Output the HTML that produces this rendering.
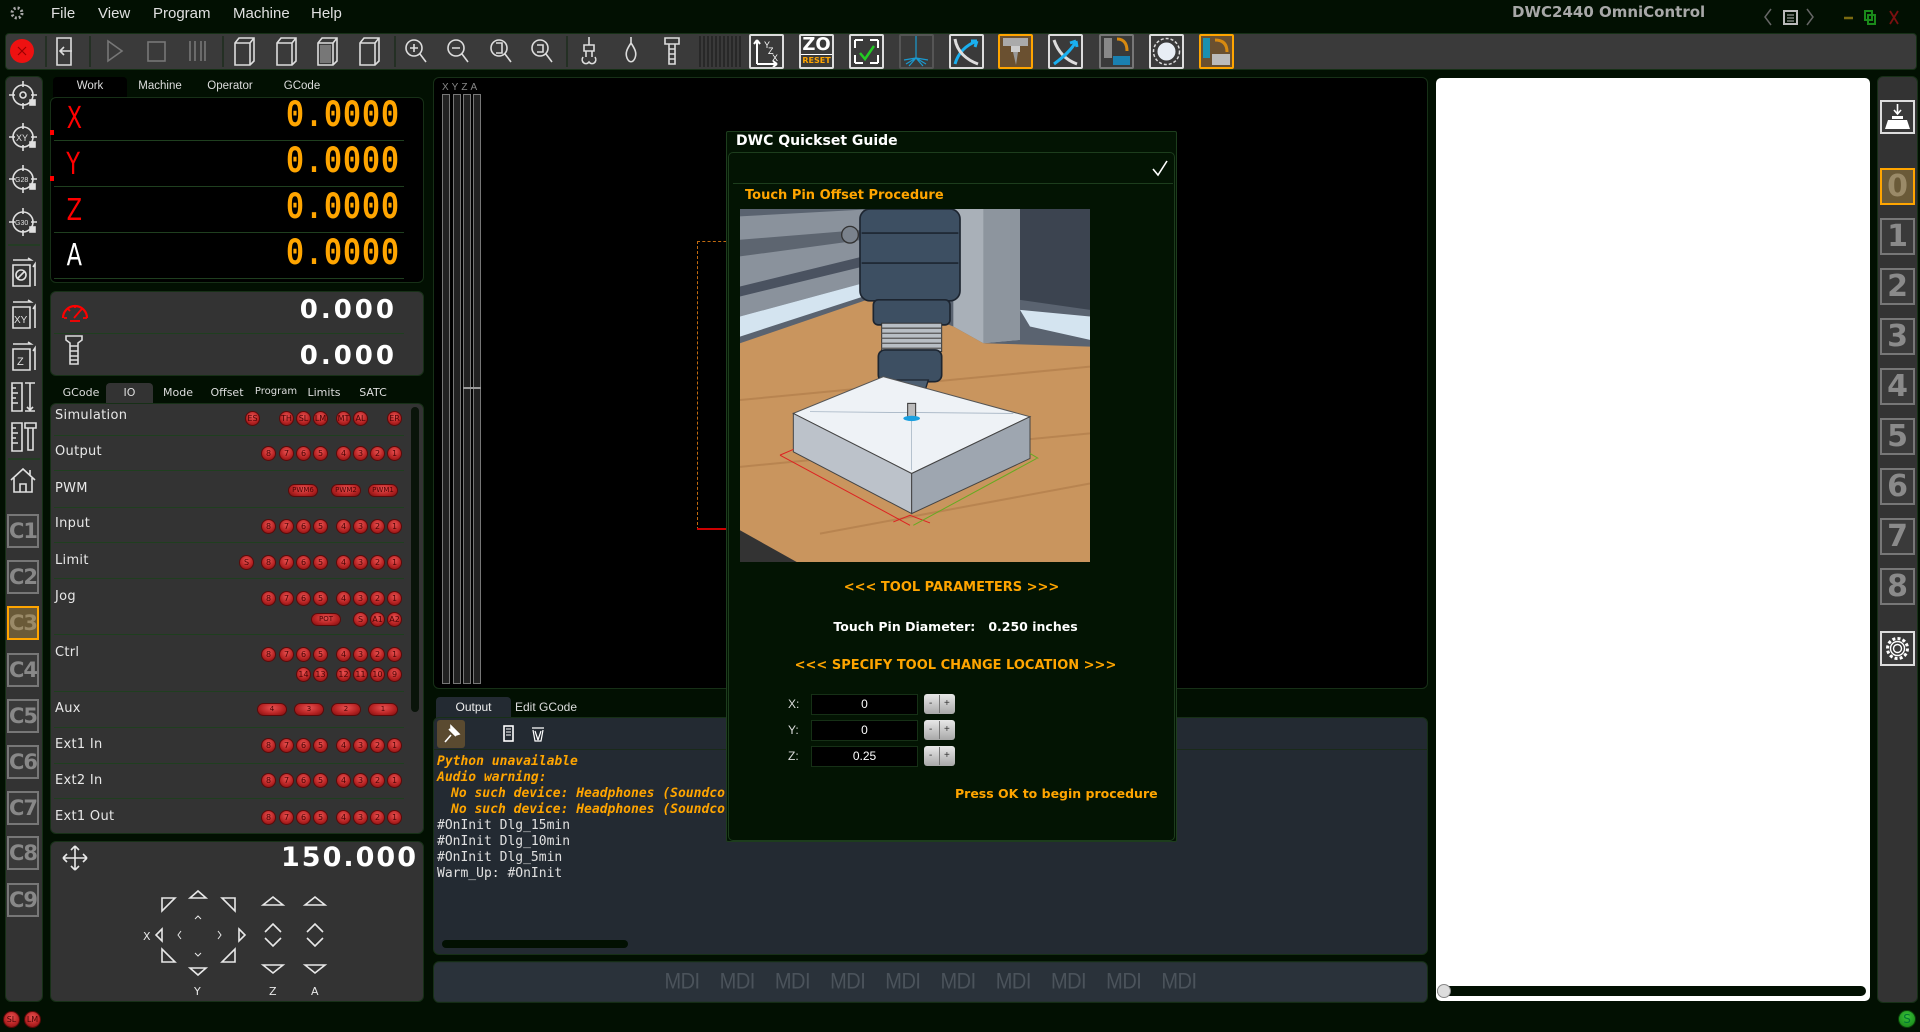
<!DOCTYPE html>
<html><head><meta charset="utf-8">
<style>
*{margin:0;padding:0;box-sizing:border-box}
body{width:1920px;height:1032px;background:#021002;position:relative;overflow:hidden;font-family:"Liberation Sans","DejaVu Sans",sans-serif;color:#ddd}
.a{position:absolute}
.menu{top:5px;font-size:15px;color:#e0e0e0}
.tb{left:5px;top:33px;width:1912px;height:37px;background:#3a3a3a;border:1px solid #163016;border-radius:4px}
.cb{top:34px;width:35px;height:35px;border:2px solid #ddd;background:#3a3a3a;border-radius:2px}
.panel{background:#333;border:1px solid #173017;border-radius:6px}
.lcol{left:5px;top:76px;width:38px;height:926px;background:#333;border:1px solid #173017;border-radius:6px}
.cbox{left:7px;width:32px;height:34px;border:2px solid #777;background:#3a3a3a;font:bold 21px "DejaVu Sans",sans-serif;color:#888;text-align:center;line-height:30px;letter-spacing:-1px;overflow:hidden}
.nbox{left:1880px;width:35px;height:37px;border:2px solid #777;background:#3a3a3a;font:bold 30px "DejaVu Sans",sans-serif;color:#8a8a8a;text-align:center;line-height:33px}
.tab{font-size:11.5px;color:#ddd;text-align:center}
.dro{font:bold 30px "Liberation Mono",monospace;color:#ffa500;transform:scaleY(1.3);transform-origin:right center;letter-spacing:1px}
.ax{font:30px "DejaVu Sans",sans-serif;color:#f00;transform:scaleX(.75)}
.lbl{left:55px;font:13px "DejaVu Sans",sans-serif;color:#e8e8e8;letter-spacing:.3px}
.hl{left:54px;width:350px;height:1px;background:#1f3f1f}
.led{position:absolute;width:15px;height:15px;margin:-8px 0 0 -8px;border-radius:50%;background:radial-gradient(circle at 50% 35%,#e85050,#b52222 60%,#7a1010);border:1px solid #5a0a0a;font:8px "DejaVu Sans",sans-serif;color:#4a0505;text-align:center;line-height:13px}
.pill{position:absolute;width:30px;height:13px;margin:-7px 0 0 -15px;border-radius:7px;background:radial-gradient(ellipse at 50% 35%,#e85050,#b52222 60%,#7a1010);border:1px solid #5a0a0a;font:7px "DejaVu Sans",sans-serif;color:#4a0505;text-align:center;line-height:11px}
.out{font:italic bold 13px "DejaVu Sans Mono","Liberation Mono",monospace;color:#ffa500;left:437px}
.outw{font:13px "DejaVu Sans Mono","Liberation Mono",monospace;color:#e0e0e0;left:437px}
.inp{left:811px;width:107px;height:21px;background:#000;border:1px solid #163016;color:#fff;font-size:12px;text-align:center;line-height:19px}
.pm{left:924px;width:31px;height:20px;background:linear-gradient(#e8e8e8,#a8a8a8);border-radius:3px;font:10px sans-serif;color:#333;line-height:20px}
.xyl{left:788px;font-size:12px;color:#ddd}
</style></head><body>

<svg class="a" style="left:8px;top:4px" width="18" height="18" viewBox="0 0 18 18"><circle cx="9" cy="9" r="5" fill="none" stroke="#aaa" stroke-width="3" stroke-dasharray="2 2"/></svg>
<div class="a menu" style="left:51px">File</div>
<div class="a menu" style="left:98px">View</div>
<div class="a menu" style="left:153px">Program</div>
<div class="a menu" style="left:233px">Machine</div>
<div class="a menu" style="left:311px">Help</div>
<div class="a" style="left:1512px;top:3px;font:bold 15px 'DejaVu Sans',sans-serif;color:#a8a8a8">DWC2440 OmniControl</div>
<svg class="a" style="left:1762px;top:6px" width="158" height="22" viewBox="0 0 158 22">
<path d="M9 3 L3 11 L9 19" fill="none" stroke="#666" stroke-width="1.5"/>
<rect x="22" y="5" width="13" height="13" fill="none" stroke="#bbb" stroke-width="2"/><path d="M25 9h7M25 12h7M25 15h7" stroke="#bbb"/>
<path d="M45 3 L51 11 L45 19" fill="none" stroke="#666" stroke-width="1.5"/>
<path d="M82 12h9" stroke="#7a6a10" stroke-width="2.5"/>
<rect x="103" y="5" width="7" height="9" fill="none" stroke="#1a8a1a" stroke-width="2"/><rect x="106" y="9" width="7" height="9" fill="none" stroke="#1a8a1a" stroke-width="2"/>
<path d="M128 5l8 13M136 5l-8 13" stroke="#7a1010" stroke-width="1.8"/>
</svg>

<div class="a tb"></div>
<svg class="a" style="left:0;top:33px" width="760" height="37" viewBox="0 0 760 37" fill="none" stroke="#ddd" stroke-width="1.6">
<circle cx="22" cy="18" r="12" fill="#ee1111" stroke="none"/><path d="M18 14l8 8M26 14l-8 8" stroke="#900" stroke-width="1.2"/>
<path d="M46 3v31M90 3v31M223 3v31M395 3v31M567 3v31" stroke="#1c2c1c" stroke-width="1.5"/>
<path d="M57 5h14v27H57z M72 18H60 M64 14l-4 4 4 4"/>
<path d="M108 8l14 10-14 10z" stroke="#777"/>
<rect x="148" y="9" width="17" height="19" stroke="#777"/>
<path d="M190 8v20M195 8v20M201 8v20M205 8v20" stroke="#777"/>
<path d="M235 10l4-5h15v23l-4 4h-15z M235 10h15v22 M250 10l4-5" />
<path d="M277 10l4-5h15v23l-4 4h-15z M277 10h15v22 M292 10l4-5" />
<path d="M318 10l4-5h15v23l-4 4h-15z M318 10h15v22 M333 10l4-5" /><rect x="320" y="12" width="11" height="18" fill="#777" stroke="none"/>
<path d="M360 10l4-5h15v23l-4 4h-15z M360 10h15v22 M375 10l4-5" />
<circle cx="414" cy="15" r="8"/><path d="M420 21l6 8 M410 15h8 M414 11v8"/>
<circle cx="456" cy="15" r="8"/><path d="M462 21l6 8 M452 15h8"/>
<circle cx="499" cy="15" r="8"/><path d="M505 21l6 8 M496 10h6v10h-6"/>
<circle cx="540" cy="15" r="8"/><path d="M546 21l6 8 M537 12h6v7h-6"/>
<path d="M589 4v8 M584 12h10v6h-10z M586 18v6 M592 18v6 M583 24c-3 5 3 9 6 5 3 4 9 0 6-5"/>
<path d="M631 4v6 M631 10c-4 6-6 10-4 15 2 5 6 5 8 0 2-5 0-9-4-15z"/>
<path d="M665 5h14v6h-14z M669 11h6v20h-6z M669 16h6M669 21h6M669 26h6"/>
<path d="M700 3v31M704 3v31M708 3v31M712 3v31M716 3v31M720 3v31M724 3v31M728 3v31M732 3v31M736 3v31M740 3v31" stroke="#222" stroke-width="1.5"/>
</svg>
<div class="a cb" style="left:749px"><svg width="31" height="31" viewBox="0 0 31 31" fill="none" stroke="#fff" stroke-width="2"><path d="M6 28V4M6 4l-3 4M6 4l3 4M6 28h20M26 28l-4-3M26 28l-4 3"/><text x="13" y="12" font-size="9" fill="#fff" stroke="none">Y</text><text x="17" y="18" font-size="9" fill="#fff" stroke="none">Z</text><text x="21" y="25" font-size="9" fill="#fff" stroke="none">X</text></svg></div>
<div class="a cb" style="left:799px;font:bold 18px 'DejaVu Sans',sans-serif;color:#fff;text-align:center;line-height:18px">ZO<div style="font-size:8px;color:#ffa500;border-top:1px solid #fff;line-height:11px">RESET</div></div>
<div class="a cb" style="left:849px"><svg width="31" height="31" viewBox="0 0 31 31" fill="none" stroke="#fff" stroke-width="2"><path d="M4 4h8M4 4v8M27 4h-8M27 4v8M4 27h8M4 27v-8M27 27h-8M27 27v-8"/><path d="M9 17l5 6 9-13" stroke="#2c2" stroke-width="2.5"/></svg></div>
<div class="a cb" style="left:899px;border-color:#555"><svg width="31" height="31" viewBox="0 0 31 31" fill="none" stroke="#1a9ad0" stroke-width="1.2"><path d="M15 0v22M15 22l-10 6M15 22l10 6M15 22l-7 8M15 22l7 8M15 22l-12 2M15 22l12 2"/></svg></div>
<div class="a cb" style="left:949px"><svg width="31" height="31" viewBox="0 0 31 31" fill="none" stroke-width="3"><path d="M4 28C8 14 18 8 26 5M26 5l-6 0M26 5l-2 6" stroke="#1ab0f0"/><path d="M4 3C6 16 16 24 27 28" stroke="#ddd"/></svg></div>
<div class="a cb" style="left:998px;border-color:#ffa500;background:#6a5030"><svg width="31" height="31" viewBox="0 0 31 31"><rect x="3" y="2" width="25" height="8" fill="#aaa"/><rect x="11" y="10" width="9" height="6" fill="#ccc"/><path d="M13 16h5l-2 13z" fill="#999"/></svg></div>
<div class="a cb" style="left:1048px"><svg width="31" height="31" viewBox="0 0 31 31" fill="none" stroke-width="3"><path d="M4 4C8 16 16 24 27 28" stroke="#ddd"/><path d="M4 28C12 22 22 14 26 5M26 5l-6 2M26 5l1 6" stroke="#1ab0f0"/></svg></div>
<div class="a cb" style="left:1099px;border-color:#777"><svg width="31" height="31" viewBox="0 0 31 31"><rect x="3" y="2" width="8" height="20" fill="#888"/><rect x="12" y="20" width="17" height="9" fill="#1a80b0"/><path d="M16 3c8 0 10 6 10 12" stroke="#d88a10" stroke-width="3" fill="none"/></svg></div>
<div class="a cb" style="left:1149px"><svg width="31" height="31" viewBox="0 0 31 31"><circle cx="15.5" cy="15.5" r="9" fill="#e8eef5"/><circle cx="15.5" cy="15.5" r="13" fill="none" stroke="#ddd" stroke-width="1.5" stroke-dasharray="3 2"/></svg></div>
<div class="a cb" style="left:1199px;border-color:#ffa500;background:#6a5030"><svg width="31" height="31" viewBox="0 0 31 31"><rect x="2" y="2" width="7" height="20" fill="#1a90b0"/><rect x="11" y="18" width="18" height="11" fill="#bbb"/><path d="M26 16c0-8-4-12-12-12" stroke="#d88a10" stroke-width="3" fill="none"/></svg></div>

<div class="a lcol"></div>
<svg class="a" style="left:5px;top:76px" width="38" height="420" viewBox="0 0 38 420" fill="none" stroke="#e0e0e0" stroke-width="1.6">
<g><circle cx="18" cy="19" r="10"/><path d="M18 5v6M18 27v6M4 19h6M26 19h6"/><circle cx="18" cy="19" r="3"/><rect x="25" y="24" width="5" height="5" fill="#e0e0e0"/></g>
<g transform="translate(0,42)"><circle cx="18" cy="19" r="10"/><path d="M18 5v6M18 27v6M4 19h6M26 19h6"/><text x="11" y="23" font-size="9" fill="#e0e0e0" stroke="none">XY</text><rect x="25" y="24" width="5" height="5" fill="#e0e0e0"/></g>
<g transform="translate(0,84)"><circle cx="18" cy="19" r="10"/><path d="M18 5v6M18 27v6M4 19h6M26 19h6"/><text x="10" y="22" font-size="7" fill="#e0e0e0" stroke="none">G28</text><rect x="25" y="24" width="5" height="5" fill="#e0e0e0"/></g>
<g transform="translate(0,127)"><circle cx="18" cy="19" r="10"/><path d="M18 5v6M18 27v6M4 19h6M26 19h6"/><text x="10" y="22" font-size="7" fill="#e0e0e0" stroke="none">G30</text><rect x="25" y="24" width="5" height="5" fill="#e0e0e0"/></g>
<path d="M3 169h32" stroke="#1f3f1f"/>
<g transform="translate(0,180)"><path d="M8 4h18l-3-2M8 9h17v21H8z M30 30V8l-2 3"/><circle cx="16" cy="19" r="5"/><path d="M12 23l8-8"/></g>
<g transform="translate(0,222)"><path d="M8 4h18l-3-2M8 9h17v21H8z M30 30V8l-2 3"/><text x="9" y="25" font-size="10" fill="#e0e0e0" stroke="none">XY</text></g>
<g transform="translate(0,264)"><path d="M8 4h18l-3-2M8 9h17v21H8z M30 30V8l-2 3"/><text x="12" y="25" font-size="11" fill="#e0e0e0" stroke="none">Z</text></g>
<g transform="translate(0,304)"><path d="M7 3h10v28H7z M7 8h4M7 13h6M7 18h4M7 23h6M20 3h10M25 3v27M20 31h10M22 27l3 3 3-3"/></g>
<g transform="translate(0,344)"><path d="M7 3h10v28H7z M7 8h4M7 13h6M7 18h4M7 23h6M20 3h11v5H20z M23 8h5v22h-5z"/></g>
<path d="M3 383h32" stroke="#1f3f1f"/>
<g transform="translate(0,388)"><path d="M6 16L18 5l12 11M9 14v14h18V14M15 28v-8h6v8M25 6v5"/></g>
<path d="M3 422h32M3 432h32" stroke="#1f3f1f"/>
</svg>
<div class="a cbox" style="top:514px">C1</div>
<div class="a cbox" style="top:560px">C2</div>
<div class="a cbox" style="top:606px;border-color:#ffa500;background:#6a5a38;color:#9a8a68">C3</div>
<div class="a cbox" style="top:653px">C4</div>
<div class="a cbox" style="top:699px">C5</div>
<div class="a cbox" style="top:745px">C6</div>
<div class="a cbox" style="top:791px">C7</div>
<div class="a cbox" style="top:836px">C8</div>
<div class="a cbox" style="top:883px">C9</div>

<div class="a" style="left:53px;top:77px;width:74px;height:22px;background:#000;border-radius:4px 4px 0 0"></div>
<div class="a tab" style="left:53px;top:80px;width:74px">Work</div>
<div class="a tab" style="left:130px;top:80px;width:60px">Machine</div>
<div class="a tab" style="left:200px;top:80px;width:60px">Operator</div>
<div class="a tab" style="left:272px;top:80px;width:60px">GCode</div>
<div class="a" style="left:50px;top:97px;width:374px;height:186px;background:#000;border:1px solid #173017;border-radius:6px"></div>
<div class="a hl" style="top:140px"></div>
<div class="a hl" style="top:186px"></div>
<div class="a hl" style="top:232px"></div>
<div class="a hl" style="top:278px"></div>
<div class="a" style="left:50px;top:130px;width:4px;height:5px;background:#f00"></div>
<div class="a" style="left:50px;top:176px;width:4px;height:5px;background:#f00"></div>
<div class="a ax" style="left:64px;top:101px">X</div>
<div class="a ax" style="left:64px;top:147px">Y</div>
<div class="a ax" style="left:64px;top:193px">Z</div>
<div class="a ax" style="left:64px;top:238px;color:#fff">A</div>
<div class="a dro" style="right:1520px;top:100px">0.0000</div>
<div class="a dro" style="right:1520px;top:146px">0.0000</div>
<div class="a dro" style="right:1520px;top:192px">0.0000</div>
<div class="a dro" style="right:1520px;top:238px">0.0000</div>

<div class="a panel" style="left:50px;top:291px;width:374px;height:85px"></div>
<div class="a hl" style="top:333px"></div>
<svg class="a" style="left:60px;top:296px" width="30" height="72" viewBox="0 0 30 72" fill="none">
<path d="M3 22a12 12 0 1 1 24 0" stroke="#f00" stroke-width="2.2"/><path d="M4 22h3M23 22h4M15 9v3M8 13l2 2M22 13l-2 2M14 22l6-7M10 25h10" stroke="#f00" stroke-width="1.8"/>
<path d="M6 40h16v4l-4 3v3h-8v-3l-4-3z M10 50h8v18h-8z M10 55h8M10 60h8M10 64h8" stroke="#ddd" stroke-width="1.6"/>
</svg>
<div class="a" style="right:1523px;top:295px;font:bold 26px 'DejaVu Sans',sans-serif;color:#fff;letter-spacing:3px">0.000</div>
<div class="a" style="right:1523px;top:341px;font:bold 26px 'DejaVu Sans',sans-serif;color:#fff;letter-spacing:3px">0.000</div>

<div class="a" style="left:106px;top:383px;width:47px;height:22px;background:#333;border-radius:4px 4px 0 0"></div>
<div class="a tab" style="left:58px;top:386px;width:46px;font-family:'DejaVu Sans';font-size:11px">GCode</div>
<div class="a tab" style="left:106px;top:386px;width:47px;font-family:'DejaVu Sans';font-size:11px">IO</div>
<div class="a tab" style="left:157px;top:386px;width:42px;font-family:'DejaVu Sans';font-size:11px">Mode</div>
<div class="a tab" style="left:204px;top:386px;width:46px;font-family:'DejaVu Sans';font-size:11px">Offset</div>
<div class="a tab" style="left:252px;top:386px;width:48px;font-family:'DejaVu Sans';font-size:10px">Program</div>
<div class="a tab" style="left:302px;top:386px;width:44px;font-family:'DejaVu Sans';font-size:11px">Limits</div>
<div class="a tab" style="left:352px;top:386px;width:42px;font-family:'DejaVu Sans';font-size:11px">SATC</div>
<div class="a panel" style="left:50px;top:403px;width:374px;height:431px"></div>
<div class="a" style="left:411px;top:407px;width:8px;height:305px;background:#0a140a;border-radius:4px"></div>
<div class="a hl" style="top:435px"></div><div class="a hl" style="top:470px"></div><div class="a hl" style="top:507px"></div><div class="a hl" style="top:542px"></div><div class="a hl" style="top:578px"></div><div class="a hl" style="top:634px"></div><div class="a hl" style="top:691px"></div><div class="a hl" style="top:727px"></div><div class="a hl" style="top:763px"></div><div class="a hl" style="top:798px"></div>
<div class="a lbl" style="top:408px">Simulation</div>
<div class="a lbl" style="top:444px">Output</div>
<div class="a lbl" style="top:481px">PWM</div>
<div class="a lbl" style="top:516px">Input</div>
<div class="a lbl" style="top:553px">Limit</div>
<div class="a lbl" style="top:589px">Jog</div>
<div class="a lbl" style="top:645px">Ctrl</div>
<div class="a lbl" style="top:701px">Aux</div>
<div class="a lbl" style="top:737px">Ext1 In</div>
<div class="a lbl" style="top:773px">Ext2 In</div>
<div class="a lbl" style="top:809px">Ext1 Out</div>

<div style="position:absolute;left:0;top:419px"><span class="led" style="left:253px">ES</span><span class="led" style="left:287px">TH</span><span class="led" style="left:304px">SL</span><span class="led" style="left:321px">LM</span><span class="led" style="left:344px">MT</span><span class="led" style="left:361px">AL</span><span class="led" style="left:395px">ER</span></div>
<div style="position:absolute;left:0;top:454px"><span class="led" style="left:269px">8</span><span class="led" style="left:287px">7</span><span class="led" style="left:304px">6</span><span class="led" style="left:321px">5</span><span class="led" style="left:344px">4</span><span class="led" style="left:361px">3</span><span class="led" style="left:378px">2</span><span class="led" style="left:395px">1</span></div>
<div style="position:absolute;left:0;top:491px"><span class="pill" style="left:303px">PWM6</span><span class="pill" style="left:346px">PWM2</span><span class="pill" style="left:383px">PWM1</span></div>
<div style="position:absolute;left:0;top:527px"><span class="led" style="left:269px">8</span><span class="led" style="left:287px">7</span><span class="led" style="left:304px">6</span><span class="led" style="left:321px">5</span><span class="led" style="left:344px">4</span><span class="led" style="left:361px">3</span><span class="led" style="left:378px">2</span><span class="led" style="left:395px">1</span></div>
<div style="position:absolute;left:0;top:563px"><span class="led" style="left:247px">S</span><span class="led" style="left:269px">8</span><span class="led" style="left:287px">7</span><span class="led" style="left:304px">6</span><span class="led" style="left:321px">5</span><span class="led" style="left:344px">4</span><span class="led" style="left:361px">3</span><span class="led" style="left:378px">2</span><span class="led" style="left:395px">1</span></div>
<div style="position:absolute;left:0;top:599px"><span class="led" style="left:269px">8</span><span class="led" style="left:287px">7</span><span class="led" style="left:304px">6</span><span class="led" style="left:321px">5</span><span class="led" style="left:344px">4</span><span class="led" style="left:361px">3</span><span class="led" style="left:378px">2</span><span class="led" style="left:395px">1</span></div>
<div style="position:absolute;left:0;top:620px"><span class="pill" style="left:326px">POT</span><span class="led" style="left:361px">S</span><span class="led" style="left:378px">A1</span><span class="led" style="left:395px">A2</span></div>
<div style="position:absolute;left:0;top:655px"><span class="led" style="left:269px">8</span><span class="led" style="left:287px">7</span><span class="led" style="left:304px">6</span><span class="led" style="left:321px">5</span><span class="led" style="left:344px">4</span><span class="led" style="left:361px">3</span><span class="led" style="left:378px">2</span><span class="led" style="left:395px">1</span></div>
<div style="position:absolute;left:0;top:675px"><span class="led" style="left:304px">14</span><span class="led" style="left:321px">13</span><span class="led" style="left:344px">12</span><span class="led" style="left:361px">11</span><span class="led" style="left:378px">10</span><span class="led" style="left:395px">9</span></div>
<div style="position:absolute;left:0;top:710px"><span class="pill" style="left:272px">4</span><span class="pill" style="left:309px">3</span><span class="pill" style="left:346px">2</span><span class="pill" style="left:383px">1</span></div>
<div style="position:absolute;left:0;top:746px"><span class="led" style="left:269px">8</span><span class="led" style="left:287px">7</span><span class="led" style="left:304px">6</span><span class="led" style="left:321px">5</span><span class="led" style="left:344px">4</span><span class="led" style="left:361px">3</span><span class="led" style="left:378px">2</span><span class="led" style="left:395px">1</span></div>
<div style="position:absolute;left:0;top:781px"><span class="led" style="left:269px">8</span><span class="led" style="left:287px">7</span><span class="led" style="left:304px">6</span><span class="led" style="left:321px">5</span><span class="led" style="left:344px">4</span><span class="led" style="left:361px">3</span><span class="led" style="left:378px">2</span><span class="led" style="left:395px">1</span></div>
<div style="position:absolute;left:0;top:818px"><span class="led" style="left:269px">8</span><span class="led" style="left:287px">7</span><span class="led" style="left:304px">6</span><span class="led" style="left:321px">5</span><span class="led" style="left:344px">4</span><span class="led" style="left:361px">3</span><span class="led" style="left:378px">2</span><span class="led" style="left:395px">1</span></div>

<div class="a panel" style="left:50px;top:841px;width:374px;height:161px"></div>
<div class="a" style="right:1502px;top:842px;font:bold 27px 'DejaVu Sans',sans-serif;color:#fff;letter-spacing:2px">150.000</div>
<svg class="a" style="left:40px;top:840px" width="390" height="170" viewBox="0 0 390 170" fill="none" stroke="#e8e8e8" stroke-width="1.6">
<path d="M23 18h24M35 6v24M23 18l4-4M23 18l4 4M47 18l-4-4M47 18l-4 4M35 6l-4 4M35 6l4 4M35 30l-4-4M35 30l4-4"/>
<path d="M122 58h13l-13 13z"/><path d="M150 58l8-7 8 7z"/><path d="M195 58h-13l13 13z"/>
<path d="M122 122h13l-13-13z"/><path d="M150 128l8 7 8-7z"/><path d="M195 122h-13l13-13z"/>
<path d="M122 89l-6 6 6 6z"/><path d="M199 89l6 6-6 6z"/>
<path d="M141 91l-3 4 3 4M178 91l3 4-3 4M155 79l3-3 3 3M155 113l3 3 3-3" stroke-width="1"/>
<path d="M223 65l10-8 10 8z M265 65l10-8 10 8z M223 125l10 8 10-8z M265 125l10 8 10-8z"/>
<path d="M225 92l8-8 8 8M225 98l8 8 8-8M267 92l8-8 8 8M267 98l8 8 8-8"/>
<text x="103" y="100" font-size="11" fill="#e8e8e8" stroke="none" font-family="DejaVu Sans">X</text>
<text x="154" y="155" font-size="11" fill="#e8e8e8" stroke="none" font-family="DejaVu Sans">Y</text>
<text x="229" y="155" font-size="11" fill="#e8e8e8" stroke="none" font-family="DejaVu Sans">Z</text>
<text x="271" y="155" font-size="11" fill="#e8e8e8" stroke="none" font-family="DejaVu Sans">A</text>
</svg>

<div class="a" style="left:433px;top:77px;width:995px;height:612px;background:#000;border:1px solid #173017;border-radius:6px"></div>
<div class="a" style="left:442px;top:82px;font-size:10px;color:#888;letter-spacing:3px">XYZA</div>
<div class="a" style="left:442px;top:94px;width:8px;height:590px;border:1px solid #777;background:#222"></div>
<div class="a" style="left:453px;top:94px;width:8px;height:590px;border:1px solid #777;background:#222"></div>
<div class="a" style="left:463px;top:94px;width:8px;height:590px;border:1px solid #777;background:#222"></div>
<div class="a" style="left:473px;top:94px;width:8px;height:590px;border:1px solid #777;background:#222"></div>
<div class="a" style="left:463px;top:387px;width:18px;height:2px;background:#999"></div>
<div class="a" style="left:697px;top:241px;width:40px;height:289px;border:1px dashed #c06a10;border-right:none"></div>
<div class="a" style="left:697px;top:528px;width:30px;height:2px;background:#c00"></div>

<div class="a" style="left:436px;top:697px;width:75px;height:22px;background:#232a32;border-radius:4px 4px 0 0"></div>
<div class="a" style="left:436px;top:700px;width:75px;text-align:center;font-size:12px;color:#eee">Output</div>
<div class="a" style="left:515px;top:700px;font-size:12px;color:#ddd">Edit GCode</div>
<div class="a" style="left:433px;top:717px;width:995px;height:238px;background:#232a32;border:1px solid #173017;border-radius:6px"></div>
<div class="a" style="left:434px;top:749px;width:993px;height:1px;background:#1a2a1a"></div>
<div class="a" style="left:437px;top:720px;width:28px;height:28px;background:#5a4a30;border-radius:3px"></div>
<svg class="a" style="left:437px;top:720px" width="120" height="28" viewBox="0 0 120 28" fill="none" stroke="#fff" stroke-width="1.6"><path d="M8 22l6-7M12 9l7 7M14 6l8 8-3 1-5-5z" fill="#fff"/><rect x="67" y="6" width="9" height="15"/><path d="M69 9h5M69 12h5M69 15h5" stroke-width="1"/><path d="M95 8h12M96 10l2 11h6l2-11M98 11l3 9M104 11l-3 9" stroke-width="1.2"/></svg>
<div class="a out" style="top:754px">Python unavailable</div>
<div class="a out" style="top:770px">Audio warning:</div>
<div class="a out" style="top:786px;left:451px">No such device: Headphones (Soundcore</div>
<div class="a out" style="top:802px;left:451px">No such device: Headphones (Soundcore</div>
<div class="a outw" style="top:818px">#OnInit Dlg_15min</div>
<div class="a outw" style="top:834px">#OnInit Dlg_10min</div>
<div class="a outw" style="top:850px">#OnInit Dlg_5min</div>
<div class="a outw" style="top:866px">Warm_Up: #OnInit</div>
<div class="a" style="left:442px;top:940px;width:186px;height:8px;background:#021002;border-radius:4px"></div>

<div class="a" style="left:433px;top:963px;width:995px;height:38px;background:#2a323a;border:1px solid #173017;border-radius:6px;font-size:20px;color:#4b535b;text-align:center;line-height:36px;word-spacing:15px;letter-spacing:-.5px;transform:scaleY(1.1)">MDI MDI MDI MDI MDI MDI MDI MDI MDI MDI</div>

<div class="a" style="left:1436px;top:78px;width:434px;height:923px;background:#fff;border-radius:5px"></div>
<div class="a" style="left:1437px;top:986px;width:429px;height:10px;background:#021002;border-radius:5px"></div>
<div class="a" style="left:1437px;top:984px;width:14px;height:14px;background:#ddd;border:1px solid #888;border-radius:50%"></div>

<div class="a" style="left:1877px;top:76px;width:41px;height:927px;background:#333;border:1px solid #173017;border-radius:6px"></div>
<div class="a" style="left:1880px;top:100px;width:35px;height:34px;border:2px solid #ddd;background:#3a3a3a"><svg width="31" height="30" viewBox="0 0 31 30"><path d="M15.5 2v9M12 8l3.5 4 3.5-4" stroke="#fff" stroke-width="1.6" fill="none"/><path d="M10 14h11v3H10z M6 18h19l3 9H3z" fill="#fff"/></svg></div>
<div class="a nbox" style="top:168px;border-color:#ffa500;background:#6a5a38;color:#9a8a68">0</div>
<div class="a nbox" style="top:218px">1</div>
<div class="a nbox" style="top:268px">2</div>
<div class="a nbox" style="top:318px">3</div>
<div class="a nbox" style="top:368px">4</div>
<div class="a nbox" style="top:418px">5</div>
<div class="a nbox" style="top:468px">6</div>
<div class="a nbox" style="top:518px">7</div>
<div class="a nbox" style="top:568px">8</div>
<div class="a" style="left:1880px;top:631px;width:35px;height:35px;border:2px solid #ddd;background:#3a3a3a"><svg width="31" height="31" viewBox="0 0 31 31" fill="none" stroke="#fff" stroke-width="1.4"><circle cx="15.5" cy="15.5" r="4"/><circle cx="15.5" cy="15.5" r="7"/><circle cx="15.5" cy="15.5" r="10" stroke-dasharray="3 2.2" stroke-width="3"/></svg></div>

<div class="a led" style="left:11px;top:1019px;width:17px;height:17px;line-height:15px">SL</div>
<div class="a led" style="left:32px;top:1019px;width:17px;height:17px;line-height:15px">LM</div>
<div class="a" style="left:1898px;top:1010px;width:18px;height:18px;border-radius:50%;background:radial-gradient(circle at 50% 35%,#3ac03a,#138013);border:1px solid #0a400a;font:12px 'DejaVu Sans';color:#073;text-align:center;line-height:16px">S</div>

<div class="a" style="left:726px;top:131px;width:451px;height:711px;background:#031403;border:1px solid #1d3d1d;border-radius:2px"></div>
<div class="a" style="left:736px;top:133px;font:bold 14px 'DejaVu Sans',sans-serif;color:#fff">DWC Quickset Guide</div>
<div class="a" style="left:728px;top:152px;width:447px;height:689px;border:1px solid #1d3d1d;border-radius:5px"></div>
<div class="a" style="left:733px;top:183px;width:440px;height:1px;background:#1d3d1d"></div>
<svg class="a" style="left:1150px;top:158px" width="20" height="20" viewBox="0 0 20 20"><path d="M3 11l5 6L17 3" stroke="#fff" stroke-width="1.6" fill="none"/></svg>
<div class="a" style="left:745px;top:188px;font:bold 13px 'DejaVu Sans',sans-serif;color:#ffa500">Touch Pin Offset Procedure</div>
<svg class="a" style="left:740px;top:209px" width="350" height="353" viewBox="60 28 1050 1057" preserveAspectRatio="none">
<rect x="60" y="28" width="1050" height="1057" fill="#5a6370"/>
<polygon points="60,50 430,30 430,250 60,350" fill="#8a929c"/>
<polygon points="60,120 430,90 430,120 60,170" fill="#5d6570"/>
<polygon points="60,260 430,170 430,200 60,290" fill="#4a5260"/>
<polygon points="60,350 430,250 430,290 60,410" fill="#d4e4f0"/>
<polygon points="700,28 900,28 900,420 790,430 700,380" fill="#a9b0b8"/>
<polygon points="790,28 900,28 900,420 790,430" fill="#8d959e"/>
<polygon points="900,28 1110,28 1110,330 900,300" fill="#3c4450"/>
<polygon points="900,330 1110,350 1110,420 930,380" fill="#d4e4f0"/>
<polygon points="60,430 470,290 700,380 790,430 1110,440 1110,1085 60,1085" fill="#c9955e"/>
<path d="M60 600 L1110 500 M60 800 L1110 700 M300 1000 L1110 850" stroke="#b88450" stroke-width="6"/>
<polygon points="60,990 230,1085 60,1085" fill="#333"/>
<circle cx="390" cy="105" r="25" fill="#7a828c" stroke="#333" stroke-width="4"/>
<rect x="420" y="28" width="300" height="275" rx="30" fill="#3d4f62" stroke="#1d2530" stroke-width="5"/>
<path d="M425 100h290M425 190h290" stroke="#1d2530" stroke-width="5"/>
<rect x="460" y="300" width="230" height="75" rx="15" fill="#3d4f62" stroke="#1d2530" stroke-width="5"/>
<rect x="485" y="370" width="180" height="85" fill="#b8bec4" stroke="#333" stroke-width="3"/>
<path d="M485 385h180M485 400h180M485 415h180M485 430h180M485 445h180" stroke="#555" stroke-width="4"/>
<rect x="475" y="450" width="190" height="95" rx="20" fill="#3d4f62" stroke="#1d2530" stroke-width="5"/>
<polygon points="500,540 625,540 605,605 545,605" fill="#4d5f72" stroke="#1d2530" stroke-width="4"/>
<rect x="545" y="570" width="60" height="45" fill="#aab" stroke="#333" stroke-width="3"/>
<polygon points="220,640 490,530 930,650 575,820" fill="#eef2f6" stroke="#555" stroke-width="3"/>
<polygon points="220,640 575,820 575,940 220,755" fill="#bcc2ca" stroke="#444" stroke-width="3"/>
<polygon points="575,820 930,650 930,775 575,940" fill="#9ea6b0" stroke="#444" stroke-width="3"/>
<path d="M270 635L880 640M575 655V810" stroke="#9ab" stroke-width="2"/>
<rect x="563" y="610" width="24" height="45" fill="#bbb" stroke="#333" stroke-width="3"/>
<ellipse cx="575" cy="655" rx="25" ry="8" fill="#1aa0e0"/>
<path d="M180 765L220 748M180 765L570 975M520 965L570 945L630 968" stroke="#d22" stroke-width="3" fill="none"/>
<path d="M580 975L950 775M930 760L955 775" stroke="#6a2" stroke-width="3" fill="none"/>
</svg>
<div class="a" style="left:726px;top:580px;width:451px;text-align:center;font:bold 13px 'DejaVu Sans',sans-serif;color:#ffa500">&lt;&lt;&lt; TOOL PARAMETERS &gt;&gt;&gt;</div>
<div class="a" style="left:730px;top:619px;width:451px;text-align:center;font:bold 12.5px 'DejaVu Sans',sans-serif;color:#fff;white-space:pre">Touch Pin Diameter:   0.250 inches</div>
<div class="a" style="left:730px;top:658px;width:451px;text-align:center;font:bold 13px 'DejaVu Sans',sans-serif;color:#ffa500">&lt;&lt;&lt; SPECIFY TOOL CHANGE LOCATION &gt;&gt;&gt;</div>
<div class="a xyl" style="top:697px">X:</div>
<div class="a xyl" style="top:723px">Y:</div>
<div class="a xyl" style="top:749px">Z:</div>
<div class="a inp" style="top:694px">0</div>
<div class="a inp" style="top:720px">0</div>
<div class="a inp" style="top:746px">0.25</div>
<div class="a pm" style="top:694px"><span style="position:absolute;left:5px">-</span><span style="position:absolute;left:15px;top:1px;width:1px;height:18px;background:#777"></span><span style="position:absolute;left:20px">+</span></div>
<div class="a pm" style="top:720px"><span style="position:absolute;left:5px">-</span><span style="position:absolute;left:15px;top:1px;width:1px;height:18px;background:#777"></span><span style="position:absolute;left:20px">+</span></div>
<div class="a pm" style="top:746px"><span style="position:absolute;left:5px">-</span><span style="position:absolute;left:15px;top:1px;width:1px;height:18px;background:#777"></span><span style="position:absolute;left:20px">+</span></div>
<div class="a" style="left:955px;top:786px;font:bold 12.5px 'DejaVu Sans',sans-serif;color:#ffa500">Press OK to begin procedure</div>

</body></html>
